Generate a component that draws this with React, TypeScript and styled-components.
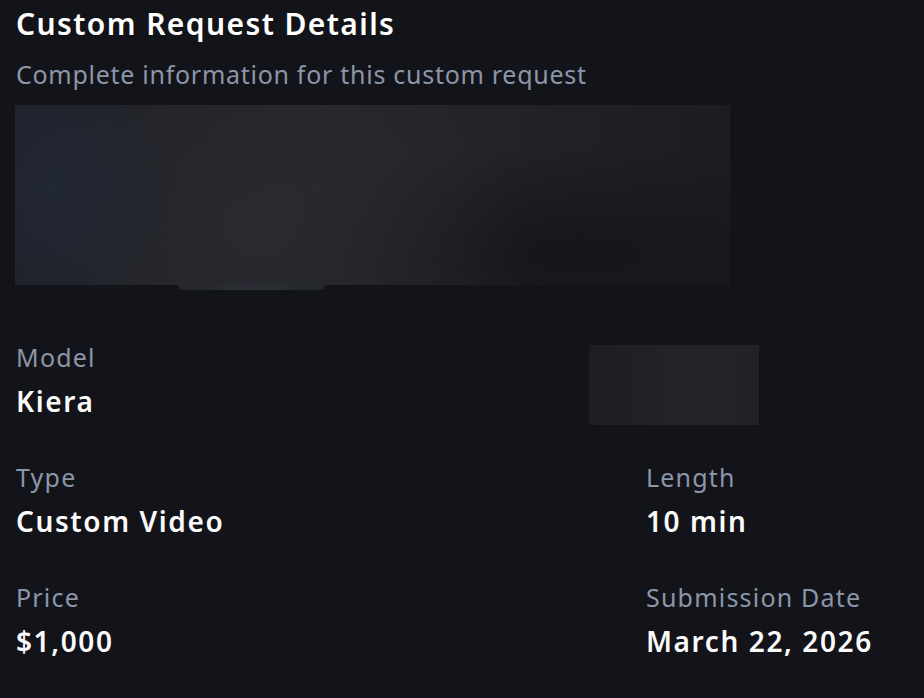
import React from "react";
import styled, { createGlobalStyle } from "styled-components";

const GlobalStyle = createGlobalStyle`
  html, body {
    margin: 0;
    padding: 0;
    background: #131419;
  }
  body {
    font-family: "Noto Sans", "Open Sans", "Liberation Sans", sans-serif;
    -webkit-font-smoothing: antialiased;
  }
`;

const Page = styled.div`
  min-height: 698px;
  box-sizing: border-box;
  padding: 6.1px 15px 0 15px;
  background: #131419;
  display: flex;
  flex-direction: column;
`;

const Title = styled.h1`
  margin: 0;
  font-size: 30px;
  line-height: 36px;
  font-weight: 600;
  letter-spacing: 1.4px;
  color: #ffffff;
  padding-left: 1px;
`;

const Subtitle = styled.p`
  margin: 16.35px 0 0;
  font-size: 25px;
  line-height: 32px;
  font-weight: 400;
  letter-spacing: 0.72px;
  color: #8c96a9;
  padding-left: 1px;
`;

const Media = styled.div`
  margin-top: 14.55px;
  width: 715px;
  display: flex;
  flex-direction: column;
`;

const MediaFrame = styled.div`
  height: 180px;
  background:
    radial-gradient(ellipse 120px 140px at 40px 80px, rgba(34, 40, 54, 0.9), rgba(34, 40, 54, 0) 100%),
    radial-gradient(ellipse 260px 200px at 250px 120px, rgba(42, 43, 49, 0.9), rgba(42, 43, 49, 0) 100%),
    radial-gradient(ellipse 320px 110px at 560px 150px, rgba(20, 21, 25, 0.95), rgba(20, 21, 25, 0) 100%),
    linear-gradient(90deg, #1e2028 0%, #232327 25%, #26272b 45%, #222327 70%, #1c1d21 100%);
`;

const MediaTab = styled.div`
  margin-left: 163px;
  width: 147px;
  height: 5px;
  border-radius: 0 0 8px 8px;
  background: linear-gradient(90deg, #24262d, #2c2e37, #25272e);
`;

const Details = styled.div`
  margin-top: 51.35px;
  display: grid;
  grid-template-columns: 630px 1fr;
  row-gap: 42px;
`;

const Field = styled.div`
  position: relative;
  display: flex;
  flex-direction: column;
  gap: 10px;
  min-height: 78px;
  padding-left: 1px;
`;

const Label = styled.div`
  font-size: 25px;
  line-height: 32px;
  font-weight: 400;
  letter-spacing: 1.2px;
  color: #8c96a9;
`;

const Value = styled.div`
  font-size: 28px;
  line-height: 36px;
  font-weight: 600;
  letter-spacing: 1.6px;
  color: #fafafa;
`;

const Redacted = styled.div`
  position: absolute;
  top: 3.65px;
  left: -56px;
  width: 170px;
  height: 80px;
  background: linear-gradient(90deg, #1c1e21 0%, #212326 45%, #222427 70%, #202225 100%);
`;

type Item = { label: string; value: string } | null;

const items: Item[] = [
  { label: "Model", value: "Kiera" },
  null,
  { label: "Type", value: "Custom Video" },
  { label: "Length", value: "10 min" },
  { label: "Price", value: "$1,000" },
  { label: "Submission Date", value: "March 22, 2026" },
];

export default function App() {
  return (
    <>
      <GlobalStyle />
      <Page>
        <Title>Custom Request Details</Title>
        <Subtitle>Complete information for this custom request</Subtitle>
        <Media>
          <MediaFrame />
          <MediaTab />
        </Media>
        <Details>
          {items.map((item, i) =>
            item ? (
              <Field key={i}>
                <Label>{item.label}</Label>
                <Value>{item.value}</Value>
              </Field>
            ) : (
              <Field key={i}>
                <Redacted />
              </Field>
            )
          )}
        </Details>
      </Page>
    </>
  );
}
